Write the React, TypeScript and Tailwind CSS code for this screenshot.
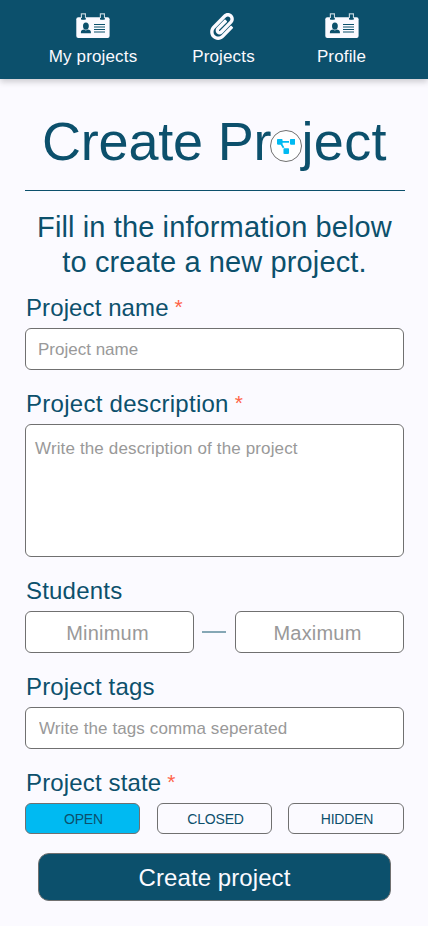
import type { ReactNode } from "react";
import { FaPaperclip, FaProjectDiagram } from "react-icons/fa";

function CardIcon() {
  return (
    <svg width="34" height="27" viewBox="0 0 34 27" className="block">
      <rect x="0.3" y="4.3" width="33.3" height="20.7" rx="2" fill="#fbfaff" />
      {[5, 24].map((x) => (
        <g key={x}>
          <rect x={x} y="0.8" width="4.8" height="5.8" fill="#0c506c" />
          <path d={`M${x + 0.4} 5V0.9h4v4.1`} fill="none" stroke="#c4d5de" strokeWidth="1.2" />
          <rect x={x + 1.2} y="1.9" width="2.4" height="4.6" fill="#0c506c" />
        </g>
      ))}
      <ellipse cx="9.9" cy="13.1" rx="2.9" ry="3.6" fill="#0c506c" />
      <path d="M4.9 20.2v-1.1c0-1.5 1.3-2.1 3.2-2.5l1.8.9 1.8-.9c1.9.4 3.2 1 3.2 2.5v1.1z" fill="#0c506c" />
      <path d="M18 11.5h11M18 14h11M18 16.5h11M18 19h11" stroke="#0c506c" strokeWidth="1.1" />
    </svg>
  );
}

function DiagramMark() {
  return (
    <span className="ml-[-1.2px] mr-[-0.6px] mt-[22px] flex size-8 shrink-0 items-center justify-center rounded-full border border-[#707070] bg-white text-[#00baf2]">
      <FaProjectDiagram className="h-[15px] w-[18.5px]" />
    </span>
  );
}

function NavItem({ label, icon, className }: { label: string; icon: ReactNode; className: string }) {
  return (
    <a className={`flex flex-col items-center ${className}`}>
      <span className="flex h-[34px] items-start">{icon}</span>
      <span className="whitespace-nowrap text-[17px] leading-5 tracking-[0.15px]">{label}</span>
    </a>
  );
}

function Label({ children, required, className = "tracking-[0.1px]" }: { children: ReactNode; required?: boolean; className?: string }) {
  return (
    <div className="flex h-9 gap-[6px] pl-px text-2xl leading-8">
      <span className={className}>{children}</span>
      {required && <span className="text-[21px] leading-[29px] text-[#ff6347]">*</span>}
    </div>
  );
}

const field = "block w-full rounded-md border border-[#707070] bg-white outline-none placeholder:text-[#999999]";
const stateButton = "h-[31px] shrink-0 rounded-md border border-[#707070] pl-[2px] text-sm tracking-[-0.2px]";

export default function App() {
  return (
    <div className="h-[926px] w-[428px] overflow-hidden bg-[#fbfaff] font-['Liberation_Sans',Arial,sans-serif] text-[#0c506c]">
      <nav className="flex h-[79px] bg-[#0c506c] pt-[13px] text-[#fbfaff] shadow-[0_3px_6px_rgba(0,0,0,0.18)]">
        <NavItem label="My projects" icon={<CardIcon />} className="ml-[48px] w-[90px]" />
        <NavItem label="Projects" icon={<FaPaperclip className="ml-[-4px] h-[27px] w-6" />} className="ml-[54px] w-[63px]" />
        <NavItem label="Profile" icon={<CardIcon />} className="ml-[62px] w-[49px]" />
      </nav>

      <main className="pl-[25px] pr-6">
        <h1 className="flex h-[112px] w-[380px] border-b border-[#0c506c] pl-[17px] pt-[29px] text-[54px] leading-[66px] tracking-[-0.2px]">
          <span className="whitespace-pre">Create Pr</span>
          <DiagramMark />
          <span className="tracking-[0.3px]">ject</span>
        </h1>
        <p className="-mx-4 pt-[19px] text-center text-[29px] leading-[35px] tracking-[0.12px]">
          Fill in the information below
          <br />
          to create a new project.
        </p>

        <form className="pt-3">
          <Label required>Project name</Label>
          <input className={`${field} h-[42px] px-3 pt-0.5 text-[17px]`} placeholder="Project name" />
          <div className="h-[18px]" />
          <Label required className="tracking-[0.28px]">Project description</Label>
          <textarea
            className={`${field} h-[133px] resize-none px-[9px] pt-3.5 text-[17px] leading-5 tracking-[0.14px]`}
            placeholder="Write the description of the project"
          />
          <div className="h-[18px]" />
          <Label className="tracking-[0.2px]">Students</Label>
          <div className="flex items-center justify-between">
            <input className={`${field} h-[42px] max-w-[169px] pr-1 pt-0.5 text-center text-xl tracking-[0.2px]`} placeholder="Minimum" />
            <span className="mr-px h-0.5 w-6 bg-[#85a7b5]" />
            <input className={`${field} h-[42px] max-w-[169px] pr-1 pt-0.5 text-center text-xl tracking-[0.2px]`} placeholder="Maximum" />
          </div>
          <div className="h-[18px]" />
          <Label className="tracking-[0.15px]">Project tags</Label>
          <input className={`${field} h-[42px] px-[13px] pt-0.5 text-[17px] tracking-[0.1px]`} placeholder="Write the tags comma seperated" />
          <div className="h-[18px]" />
          <Label required className="tracking-[0.15px]">Project state</Label>
          <div className="flex">
            <button type="button" className={`${stateButton} w-[115px] bg-[#00baf2]`}>OPEN</button>
            <button type="button" className={`${stateButton} ml-[17px] w-[115px]`}>CLOSED</button>
            <button type="button" className={`${stateButton} ml-4 w-[116px]`}>HIDDEN</button>
          </div>
          <button
            type="button"
            className="ml-[13px] mt-[19px] block h-12 w-[353px] rounded-[11px] border border-[#707070] bg-[#0c506c] pt-0.5 text-2xl tracking-[0.08px] text-[#fbfaff]"
          >
            Create project
          </button>
        </form>
      </main>
    </div>
  );
}
